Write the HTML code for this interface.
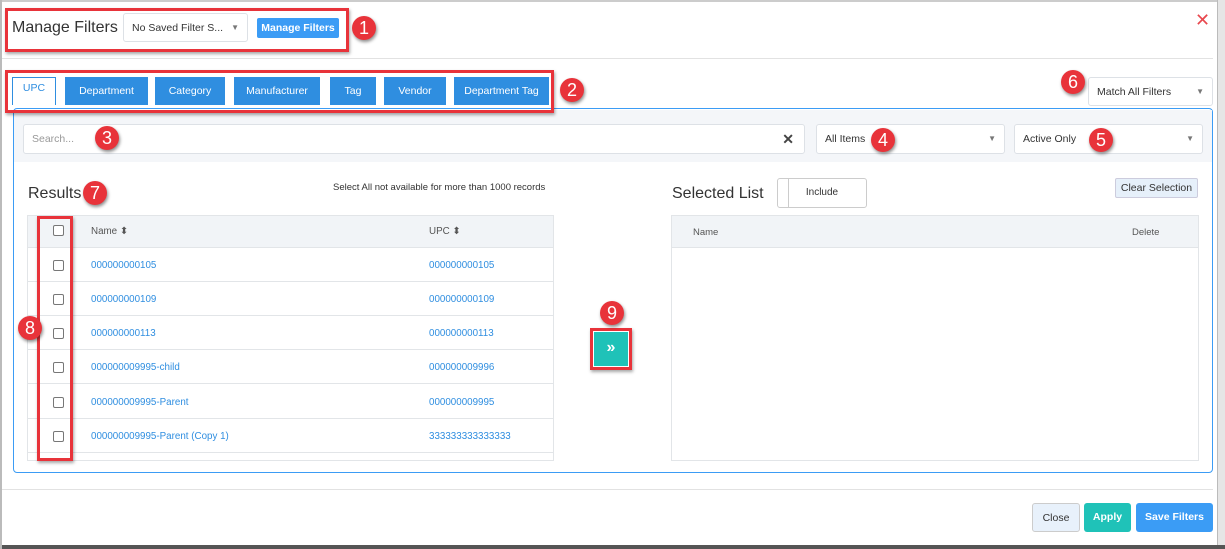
<!DOCTYPE html>
<html><head><meta charset="utf-8"><style>
*{box-sizing:border-box;margin:0;padding:0}
body{width:1225px;height:549px;position:relative;overflow:hidden;background:#fff;font-family:"Liberation Sans",sans-serif;font-size:10.5px;color:#333}
.a{position:absolute}
.badge{position:absolute;width:24px;height:24px;border-radius:50%;background:#e8333a;color:#fff;font-size:18px;text-align:center;line-height:24px;box-shadow:1px 2px 3px rgba(0,0,0,.45)}
.rb{position:absolute;border:3px solid #e8333a;box-shadow:1px 2px 3px rgba(0,0,0,.35)}
.tab{position:absolute;top:77px;height:28px;background:#2f8ee0;color:#fff;font-size:10.5px;text-align:center;line-height:28px}
.inp{position:absolute;background:#fff;border:1px solid #dde1e6;border-radius:3px;height:30px;line-height:28px;padding-left:8px;font-size:10.5px;color:#333}
.car{position:absolute;right:8px;top:0;font-size:8px;color:#777}
.cb{position:absolute;left:53px;width:11px;height:11px;border:1px solid #777;border-radius:2px;background:#fff}
.row{position:absolute;left:28px;width:525px;height:34px;border-bottom:1px solid #e2e5e8;color:#2f8ee0;font-size:9.8px}
.btn{position:absolute;top:503px;height:29px;line-height:29px;text-align:center;border-radius:3px;font-size:10.5px}
</style></head><body>
<div class="a" style="left:0;top:0;width:1225px;height:2px;background:#ccc"></div>
<div class="a" style="right:0;top:0;width:8px;height:549px;background:#e6e6e6;border-left:1px solid #bbb"></div>
<div class="a" style="left:0;bottom:0;width:1225px;height:4px;background:#555"></div>
<div class="a" style="left:0;top:0;width:2px;height:549px;background:#bbb"></div>
<div class="a" style="left:12px;top:19px;font-size:16px;color:#333">Manage Filters</div>
<div class="inp" style="left:123px;top:13px;width:125px;height:29px;line-height:28px">No Saved Filter S...<span class="car">▼</span></div>
<div class="a" style="left:257px;top:18px;width:82px;height:20px;background:#3b9cf5;border-radius:2px;color:#fff;font-size:10.5px;font-weight:bold;text-align:center;line-height:20px">Manage Filters</div>
<div class="a" style="left:1195px;top:10px;font-size:18px;color:#e8484e">✕</div>
<div class="a" style="left:2px;top:58px;width:1211px;height:1px;background:#e2e2e2"></div>

<div class="tab" style="left:12px;width:44px;background:#fff;color:#2f8ee0;border:1px solid #2f8ee0;border-bottom:none;line-height:20px">UPC</div>
<div class="tab" style="left:65px;width:83px">Department</div>
<div class="tab" style="left:155px;width:70px">Category</div>
<div class="tab" style="left:234px;width:86px">Manufacturer</div>
<div class="tab" style="left:330px;width:46px">Tag</div>
<div class="tab" style="left:384px;width:62px">Vendor</div>
<div class="tab" style="left:454px;width:95px">Department Tag</div>
<div class="inp" style="left:1088px;top:77px;width:125px;height:29px">Match All Filters<span class="car">▼</span></div>

<div class="a" style="left:13px;top:108px;width:1200px;height:365px;border:1px solid #3b9cf5;border-radius:4px"></div>
<div class="a" style="left:14px;top:110px;width:1198px;height:52px;background:#f4f6f9"></div>
<div class="inp" style="left:23px;top:124px;width:782px;color:#999">Search...<span class="a" style="right:10px;top:0;font-size:14px;color:#444;font-weight:bold">✕</span></div>
<div class="inp" style="left:816px;top:124px;width:189px">All Items<span class="car">▼</span></div>
<div class="inp" style="left:1014px;top:124px;width:189px">Active Only<span class="car">▼</span></div>

<div class="a" style="left:28px;top:185px;font-size:16px">Results</div>
<div class="a" style="left:333px;top:182px;font-size:9.5px">Select All not available for more than 1000 records</div>
<div class="a" style="left:27px;top:215px;width:527px;height:246px;border:1px solid #e2e5e8"></div>
<div class="a" style="left:28px;top:216px;width:525px;height:32px;background:#f1f4f7;border-bottom:1px solid #e2e5e8"></div>
<div class="cb" style="top:225px"></div>
<div class="a" style="left:91px;top:226px;font-size:9.8px;color:#555">Name ⬍</div>
<div class="a" style="left:429px;top:226px;font-size:9.8px;color:#555">UPC ⬍</div>
<div class="row" style="top:248px"><span class="a" style="left:63px;top:12px">000000000105</span><span class="a" style="left:401px;top:12px">000000000105</span></div>
<div class="row" style="top:282px"><span class="a" style="left:63px;top:12px">000000000109</span><span class="a" style="left:401px;top:12px">000000000109</span></div>
<div class="row" style="top:316px"><span class="a" style="left:63px;top:12px">000000000113</span><span class="a" style="left:401px;top:12px">000000000113</span></div>
<div class="row" style="top:350px"><span class="a" style="left:63px;top:12px">000000009995-child</span><span class="a" style="left:401px;top:12px">000000009996</span></div>
<div class="row" style="top:385px"><span class="a" style="left:63px;top:12px">000000009995-Parent</span><span class="a" style="left:401px;top:12px">000000009995</span></div>
<div class="row" style="top:419px"><span class="a" style="left:63px;top:12px">000000009995-Parent (Copy 1)</span><span class="a" style="left:401px;top:12px">333333333333333</span></div>
<div class="cb" style="top:260px"></div><div class="cb" style="top:294px"></div><div class="cb" style="top:328px"></div><div class="cb" style="top:362px"></div><div class="cb" style="top:397px"></div><div class="cb" style="top:431px"></div>

<div class="a" style="left:594px;top:332px;width:34px;height:34px;background:#1fc2b8;color:#fff;font-size:16px;text-align:center;line-height:32px;font-weight:bold">»</div>

<div class="a" style="left:672px;top:185px;font-size:16px">Selected List</div>
<div class="a" style="left:777px;top:178px;width:90px;height:30px;border:1px solid #ccc;border-radius:3px;text-align:center;line-height:28px;font-size:10px"><span class="a" style="left:10px;top:0;width:1px;height:28px;background:#ccc"></span>Include</div>
<div class="a" style="left:1115px;top:178px;width:83px;height:20px;background:#e6f0fa;border:1px solid #ccd;border-radius:2px;text-align:center;line-height:18px;font-size:10.5px">Clear Selection</div>
<div class="a" style="left:671px;top:215px;width:528px;height:246px;border:1px solid #e2e5e8"></div>
<div class="a" style="left:672px;top:216px;width:526px;height:32px;background:#f1f4f7;border-bottom:1px solid #e2e5e8"></div>
<div class="a" style="left:693px;top:227px;font-size:9.5px;color:#555">Name</div>
<div class="a" style="left:1132px;top:227px;font-size:9.5px;color:#555">Delete</div>

<div class="a" style="left:2px;top:489px;width:1211px;height:1px;background:#e2e2e2"></div>
<div class="btn" style="left:1032px;width:48px;background:#e8f1fb;border:1px solid #ccc">Close</div>
<div class="btn" style="left:1084px;width:47px;background:#1fc2b8;color:#fff;font-weight:bold">Apply</div>
<div class="btn" style="left:1136px;width:77px;background:#3b9cf5;color:#fff;font-weight:bold">Save Filters</div>

<div class="rb" style="left:5px;top:8px;width:344px;height:44px"></div>
<div class="rb" style="left:5px;top:70px;width:549px;height:43px"></div>
<div class="rb" style="left:37px;top:216px;width:36px;height:245px"></div>
<div class="rb" style="left:590px;top:328px;width:42px;height:42px"></div>
<div class="badge" style="left:352px;top:16px">1</div>
<div class="badge" style="left:560px;top:78px">2</div>
<div class="badge" style="left:95px;top:126px">3</div>
<div class="badge" style="left:871px;top:128px">4</div>
<div class="badge" style="left:1089px;top:128px">5</div>
<div class="badge" style="left:1061px;top:70px">6</div>
<div class="badge" style="left:83px;top:181px">7</div>
<div class="badge" style="left:18px;top:316px">8</div>
<div class="badge" style="left:600px;top:301px">9</div>
</body></html>
